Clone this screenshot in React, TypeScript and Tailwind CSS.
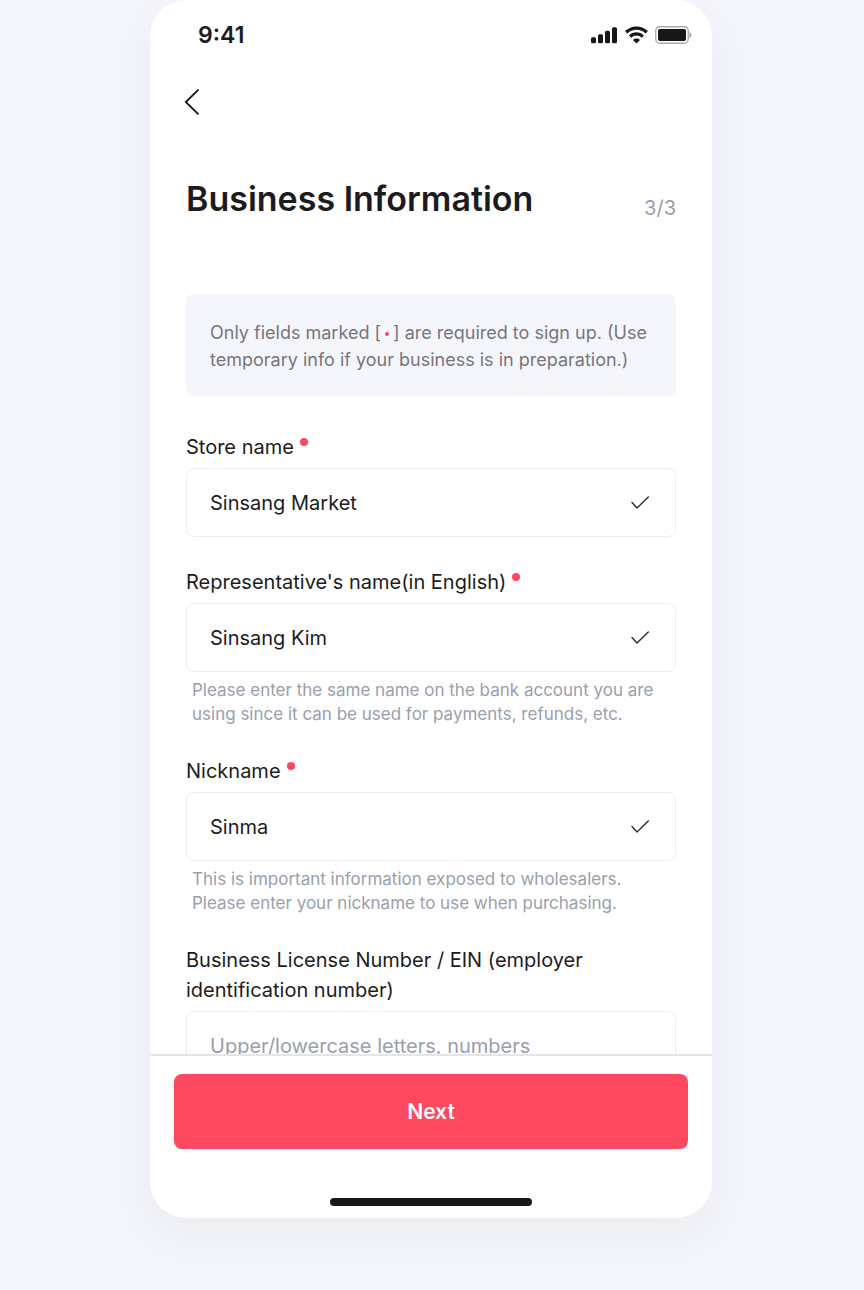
import { useState } from 'react';
import type { ReactNode } from 'react';

interface FieldProps {
  id: string;
  label: string;
  defaultValue?: string;
  placeholder?: string;
  required?: boolean;
  hint?: ReactNode;
}

function StatusBar() {
  return (
    <div className="flex h-[70px] shrink-0 items-center justify-between pl-12 pr-5">
      <span className="text-[23px] font-semibold leading-[30px]">9:41</span>
      <div className="flex items-center gap-[7px]">
        <svg width="27" height="18" viewBox="0 0 27 18" fill="#171717" aria-hidden="true">
          <rect x="0" y="11.300" width="5" height="6" rx="1.5" />
          <rect x="7" y="8.300" width="5" height="9" rx="1.5" />
          <rect x="14" y="4.800" width="5" height="12.500" rx="1.5" />
          <rect x="21" y="1.300" width="5" height="16" rx="1.5" />
        </svg>
        <svg width="23" height="18" viewBox="0 0 23 18" fill="none" stroke="#171717" strokeWidth="3.3" aria-hidden="true">
          <path d="M1.2 6.300a14.700 14.700 0 0 1 20.600 0" />
          <path d="M5.100 10.600a9.100 9.100 0 0 1 12.800 0" />
          <path d="M11.500 17.600 8 14a5 5 0 0 1 7 0Z" fill="#171717" stroke="none" />
        </svg>
        <svg width="37" height="18" viewBox="0 0 37 18" aria-hidden="true">
          <rect x="0.75" y="0.75" width="32.5" height="16.500" rx="4" fill="none" stroke="#a5a8b5" strokeWidth="1.3" />
          <rect x="3" y="3" width="28" height="12" rx="2" fill="#171717" />
          <path d="M34.500 6v6c1.200-.5 2-1.700 2-3s-.8-2.500-2-3Z" fill="#a5a8b5" />
        </svg>
      </div>
    </div>
  );
}

function Field({ id, label, defaultValue, placeholder, required, hint }: FieldProps) {
  const [value, setValue] = useState(defaultValue ?? '');

  return (
    <div>
      <label htmlFor={id} className="flex gap-[6px] text-[20px] leading-[30px]">
        {label}
        {required && <span className="mt-[6px] size-2 shrink-0 rounded-full bg-[#fd4860]" />}
      </label>
      <div className="mt-[6px] flex h-[69px] items-center rounded-lg border border-[#ededf4] bg-white pl-[23px] pr-[26px] focus-within:border-[#9a9ead]">
        <input
          id={id}
          type="text"
          value={value}
          placeholder={placeholder}
          required={required}
          onChange={(e) => setValue(e.target.value)}
          className="min-w-0 flex-1 bg-transparent text-[20px] leading-[30px] outline-none placeholder:text-[#9a9ead]"
        />
        {value && (
          <svg width="18" height="14" viewBox="0 0 18 14" fill="none" stroke="#2a2b2e" strokeWidth="1.4" aria-hidden="true">
            <path d="m1 6.500 5 5.500L17.300 1" strokeLinecap="round" strokeLinejoin="round" />
          </svg>
        )}
      </div>
      {hint && <p className="mt-[6px] pl-[6px] text-[17px] leading-6 text-[#9a9ead]">{hint}</p>}
    </div>
  );
}

export default function App() {
  return (
    <div className="h-screen bg-[#f5f6fb] pb-[72px] pr-0.5 font-['Inter',sans-serif] text-[#1c1c1e]">
      <main className="mx-auto flex h-full w-full max-w-[562px] flex-col overflow-hidden rounded-[36px] bg-white shadow-[0_16px_48px_rgba(30,30,50,0.05)]">
        <StatusBar />

        <div className="flex h-16 shrink-0 items-center pl-[34px]">
          <button type="button" aria-label="Back" className="cursor-pointer">
            <svg width="16" height="26" viewBox="0 0 16 26" fill="none" stroke="#171717" strokeWidth="1.8" aria-hidden="true">
              <path d="M14 1.200 1.800 13 14 24.800" strokeLinecap="round" strokeLinejoin="round" />
            </svg>
          </button>
        </div>

        <form id="business-form" className="min-h-0 flex-1 overflow-y-auto px-9 pt-[41px] [scrollbar-width:none]">
          <div className="flex items-start justify-between">
            <h1 className="text-[34px] font-semibold leading-[48px]">Business Information</h1>
            <span className="pt-[18px] text-[20px] leading-[30px] text-[#9a9ead]">3/3</span>
          </div>

          <p className="mt-[71px] rounded-lg bg-[#f5f6fb] px-6 pb-[23px] pt-[25px] text-[18px] leading-[27px] text-[#76777d]">
            Only fields marked [
            <span className="mx-1 inline-block size-1 rounded-full bg-[#fd4860] align-middle" />
            ] are required to sign up. (Use
            <br />
            temporary info if your business is in preparation.)
          </p>

          <div className="flex flex-col gap-[30px] pb-9 pt-9">
            <Field id="store" label="Store name" defaultValue="Sinsang Market" required />
            <Field
              id="representative"
              label="Representative's name(in English)"
              defaultValue="Sinsang Kim"
              required
              hint={<>Please enter the same name on the bank account you are<br />using since it can be used for payments, refunds, etc.</>}
            />
            <Field
              id="nickname"
              label="Nickname"
              defaultValue="Sinma"
              required
              hint={<>This is important information exposed to wholesalers.<br />Please enter your nickname to use when purchasing.</>}
            />
            <Field
              id="license"
              label="Business License Number / EIN (employer identification number)"
              placeholder="Upper/lowercase letters, numbers"
            />
          </div>
        </form>

        <footer className="shrink-0 border-t-2 border-[#e4e5eb] px-6 pb-3 pt-[18px]">
          <button
            type="submit"
            form="business-form"
            className="h-[75px] w-full cursor-pointer rounded-lg bg-[#fd4860] text-[21px] font-semibold text-white"
          >
            Next
          </button>
          <div className="mx-auto mt-[49px] h-2 w-[202px] rounded-full bg-[#171717]" />
        </footer>
      </main>
    </div>
  );
}
